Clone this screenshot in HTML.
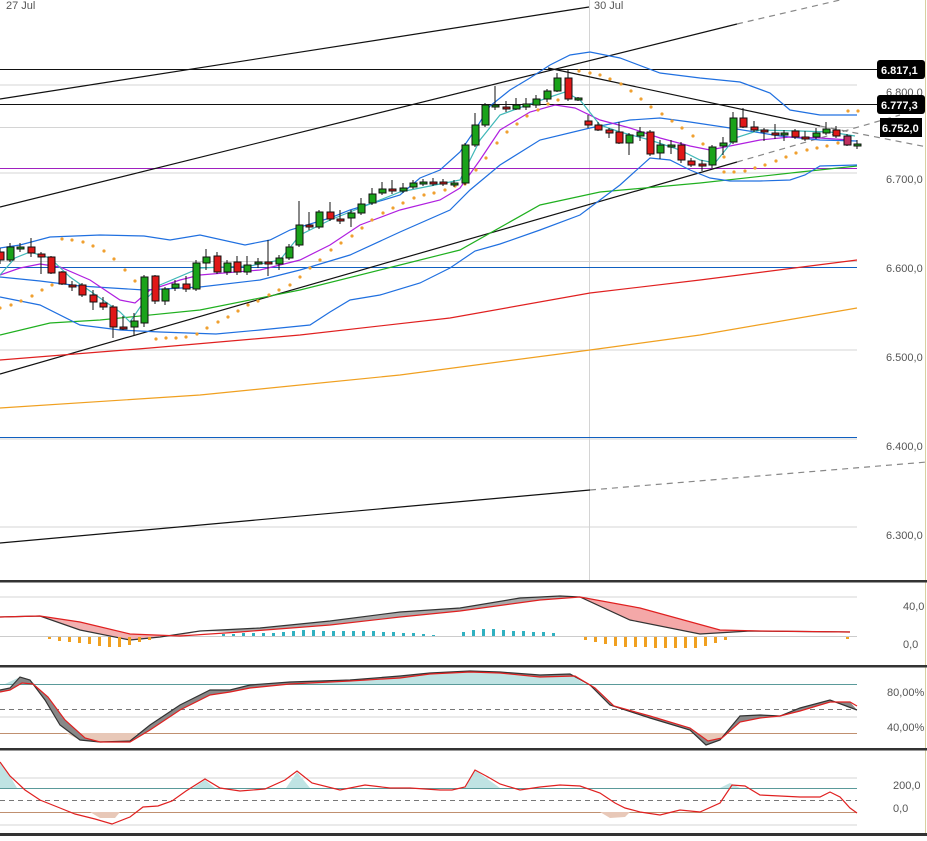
<!DOCTYPE html>
<html><head><meta charset="utf-8"><style>
html,body{margin:0;padding:0;background:#fff;}
body{width:927px;height:836px;overflow:hidden;font-family:"Liberation Sans",sans-serif;}
svg text{font-family:"Liberation Sans",sans-serif;font-size:11px;fill:#555;}
.g{fill:#1aa31a;stroke:#111;stroke-width:1}
.r{fill:#e01818;stroke:#111;stroke-width:1}
.w{stroke:#111;stroke-width:1}
</style></head><body>
<svg width="927" height="836" viewBox="0 0 927 836" xmlns="http://www.w3.org/2000/svg">
<rect width="927" height="836" fill="#fff"/>
<!-- grid -->
<g stroke="#d4d4d4" stroke-width="1">
<line x1="0" y1="85" x2="857" y2="85"/><line x1="0" y1="127.5" x2="857" y2="127.5"/><line x1="0" y1="173" x2="857" y2="173"/>
<line x1="0" y1="261.5" x2="857" y2="261.5"/><line x1="0" y1="350" x2="857" y2="350"/><line x1="0" y1="439" x2="857" y2="439"/><line x1="0" y1="527" x2="857" y2="527"/>
<line x1="589.5" y1="0" x2="589.5" y2="580"/>
<line x1="0" y1="597" x2="857" y2="597"/>
<line x1="0" y1="717" x2="857" y2="717"/>
<line x1="0" y1="778" x2="857" y2="778"/><line x1="0" y1="825" x2="857" y2="825"/>
</g>
<line x1="925.5" y1="0" x2="925.5" y2="836" stroke="#d8d0a0"/>
<text x="6" y="9">27 Jul</text><text x="594" y="9">30 Jul</text>
<!-- horizontals -->
<line x1="0" y1="69.5" x2="877" y2="69.5" stroke="#111"/>
<line x1="0" y1="104.5" x2="877" y2="104.5" stroke="#111"/>
<line x1="0" y1="168.5" x2="857" y2="168.5" stroke="#a020c0"/>
<line x1="0" y1="267.5" x2="857" y2="267.5" stroke="#1060c0"/>
<line x1="0" y1="437.5" x2="857" y2="437.5" stroke="#1060c0"/>
<!-- trend lines -->
<g stroke="#111" stroke-width="1.2" fill="none">
<line x1="0" y1="99" x2="589" y2="7"/>
<line x1="0" y1="207" x2="737" y2="24"/>
<line x1="0" y1="374" x2="737" y2="162"/>
<line x1="0" y1="543" x2="590" y2="490"/>
<line x1="548" y1="68" x2="820" y2="126"/>
</g>
<g stroke="#888" stroke-width="1.2" stroke-dasharray="6,5" fill="none">
<line x1="737" y1="24" x2="840" y2="0"/>
<line x1="737" y1="162" x2="900" y2="115"/>
<line x1="590" y1="490" x2="927" y2="462"/>
<line x1="820" y1="126" x2="927" y2="147"/>
</g>
<!-- MAs -->
<polyline fill="none" stroke="#e02020" stroke-width="1.2" points="0,360 150,348 300,335 450,318 590,293 700,280 857,260"/>
<polyline fill="none" stroke="#f0a020" stroke-width="1.2" points="0,408 200,395 400,375 590,350 700,335 857,308"/>
<polyline fill="none" stroke="#20b020" stroke-width="1.2" points="0,335 50,323 100,320 200,310 300,290 400,265 460,250 540,205 600,192 700,183 800,172 857,166"/>
<!-- bollinger -->
<g fill="none" stroke="#2070e0" stroke-width="1.2">
<polyline points="0,248 20,245 50,237 100,235 144,236 170,240 200,235 245,245 270,240 290,230 330,218 350,210 400,195 420,178 440,170 460,152 475,130 490,106 510,90 530,78 550,65 570,55 590,52 620,58 660,73 700,78 740,82 770,93 790,110 820,115 857,115"/>
<polyline points="0,277 40,281 80,286 144,290 200,287 260,280 300,270 350,255 400,232 450,210 470,190 500,165 540,140 590,128 630,120 660,118 690,122 730,128 780,136 820,140 857,141"/>
<polyline points="0,297 40,305 80,325 120,330 160,332 216,334 260,330 310,325 330,312 350,300 380,295 420,283 450,268 475,251 500,244 540,230 580,215 620,185 650,158 670,160 690,170 710,178 730,181 760,181 790,180 805,175 820,166 857,165"/>
</g>
<polyline fill="none" stroke="#b020e0" stroke-width="1.2" points="0,275 20,268 40,264 60,267 90,280 120,300 135,303 150,290 180,280 200,275 260,270 300,260 330,245 360,225 400,210 440,200 460,188 480,160 500,130 530,112 555,105 575,108 600,120 630,128 660,138 690,146 710,150 730,146 760,140 790,137 820,138 850,140"/>
<polyline fill="none" stroke="#40b8b8" stroke-width="1.2" points="0,275 15,258 30,252 50,258 70,277 100,298 120,312 130,322 145,300 160,285 200,268 250,266 280,260 300,235 330,220 360,208 400,192 440,184 460,180 480,140 500,115 530,104 550,97 565,92 580,100 600,125 620,132 650,140 680,150 700,160 715,163 735,138 760,130 800,131 830,132 855,136"/>
<!-- SAR -->
<g fill="#f0a030">
<circle cx="62" cy="239" r="1.6"/><circle cx="72" cy="240" r="1.6"/><circle cx="83" cy="242" r="1.6"/><circle cx="93" cy="246" r="1.6"/><circle cx="104" cy="251" r="1.6"/><circle cx="114" cy="259" r="1.6"/><circle cx="125" cy="270" r="1.6"/><circle cx="135" cy="281" r="1.6"/>
<circle cx="0" cy="308" r="1.6"/><circle cx="11" cy="305" r="1.6"/><circle cx="21" cy="301" r="1.6"/><circle cx="32" cy="296" r="1.6"/><circle cx="42" cy="290" r="1.6"/><circle cx="52" cy="285" r="1.6"/>
<circle cx="156" cy="339" r="1.6"/><circle cx="166" cy="338" r="1.6"/><circle cx="176" cy="338" r="1.6"/><circle cx="186" cy="337" r="1.6"/><circle cx="197" cy="334" r="1.6"/><circle cx="207" cy="328" r="1.6"/><circle cx="218" cy="322" r="1.6"/><circle cx="228" cy="317" r="1.6"/><circle cx="238" cy="311" r="1.6"/><circle cx="248" cy="305" r="1.6"/><circle cx="258" cy="301" r="1.6"/><circle cx="269" cy="295" r="1.6"/><circle cx="279" cy="290" r="1.6"/><circle cx="290" cy="285" r="1.6"/><circle cx="300" cy="277" r="1.6"/><circle cx="310" cy="268" r="1.6"/><circle cx="320" cy="260" r="1.6"/><circle cx="331" cy="250" r="1.6"/><circle cx="341" cy="243" r="1.6"/><circle cx="352" cy="236" r="1.6"/><circle cx="362" cy="228" r="1.6"/><circle cx="372" cy="220" r="1.6"/><circle cx="383" cy="213" r="1.6"/><circle cx="393" cy="208" r="1.6"/><circle cx="403" cy="203" r="1.6"/><circle cx="414" cy="198" r="1.6"/><circle cx="424" cy="195" r="1.6"/><circle cx="434" cy="193" r="1.6"/><circle cx="445" cy="190" r="1.6"/><circle cx="455" cy="186" r="1.6"/>
<circle cx="465" cy="184" r="1.6"/><circle cx="476" cy="170" r="1.6"/><circle cx="486" cy="158" r="1.6"/><circle cx="497" cy="143" r="1.6"/><circle cx="507" cy="132" r="1.6"/><circle cx="517" cy="124" r="1.6"/><circle cx="527" cy="116" r="1.6"/><circle cx="538" cy="110" r="1.6"/><circle cx="548" cy="104" r="1.6"/><circle cx="558" cy="100" r="1.6"/>
<circle cx="579" cy="71" r="1.6"/><circle cx="590" cy="73" r="1.6"/><circle cx="600" cy="75" r="1.6"/><circle cx="610" cy="79" r="1.6"/><circle cx="621" cy="84" r="1.6"/><circle cx="631" cy="91" r="1.6"/><circle cx="641" cy="99" r="1.6"/><circle cx="651" cy="107" r="1.6"/><circle cx="662" cy="114" r="1.6"/><circle cx="672" cy="121" r="1.6"/><circle cx="682" cy="128" r="1.6"/><circle cx="693" cy="136" r="1.6"/><circle cx="703" cy="144" r="1.6"/><circle cx="713" cy="151" r="1.6"/><circle cx="724" cy="157" r="1.6"/>
<circle cx="724" cy="172" r="1.6"/><circle cx="734" cy="172" r="1.6"/><circle cx="745" cy="171" r="1.6"/><circle cx="755" cy="168" r="1.6"/><circle cx="765" cy="165" r="1.6"/><circle cx="776" cy="161" r="1.6"/><circle cx="786" cy="157" r="1.6"/><circle cx="796" cy="153" r="1.6"/><circle cx="807" cy="150" r="1.6"/><circle cx="817" cy="148" r="1.6"/><circle cx="827" cy="146" r="1.6"/><circle cx="838" cy="143" r="1.6"/><circle cx="848" cy="111" r="1.6"/><circle cx="858" cy="111" r="1.6"/>
</g>
<!-- candles -->
<g>
<line class="w" x1="0" y1="248" x2="0" y2="264"/><rect class="r" x="-3" y="252" width="7" height="8"/>
<line class="w" x1="10" y1="243" x2="10" y2="262"/><rect class="g" x="7" y="247" width="7" height="13"/>
<line class="w" x1="20" y1="243" x2="20" y2="252"/><rect class="g" x="17" y="247" width="7" height="2"/>
<line class="w" x1="31" y1="238" x2="31" y2="257"/><rect class="r" x="28" y="247" width="7" height="6"/>
<line class="w" x1="41" y1="252" x2="41" y2="274"/><rect class="r" x="38" y="254" width="7" height="3"/>
<line class="w" x1="51" y1="256" x2="51" y2="274"/><rect class="r" x="48" y="257" width="7" height="16"/>
<line class="w" x1="62" y1="271" x2="62" y2="285"/><rect class="r" x="59" y="272" width="7" height="12"/>
<line class="w" x1="72" y1="281" x2="72" y2="291"/><rect class="r" x="69" y="285" width="7" height="2"/>
<line class="w" x1="82" y1="283" x2="82" y2="297"/><rect class="r" x="79" y="285" width="7" height="10"/>
<line class="w" x1="93" y1="290" x2="93" y2="310"/><rect class="r" x="90" y="295" width="7" height="7"/>
<line class="w" x1="103" y1="297" x2="103" y2="310"/><rect class="r" x="100" y="303" width="7" height="4"/>
<line class="w" x1="113" y1="305" x2="113" y2="338"/><rect class="r" x="110" y="307" width="7" height="20"/>
<line class="w" x1="123" y1="316" x2="123" y2="330"/><rect class="r" x="120" y="327" width="7" height="2"/>
<line class="w" x1="134" y1="313" x2="134" y2="336"/><rect class="g" x="131" y="321" width="7" height="6"/>
<line class="w" x1="144" y1="275" x2="144" y2="327"/><rect class="g" x="141" y="277" width="7" height="46"/>
<line class="w" x1="155" y1="275" x2="155" y2="304"/><rect class="r" x="152" y="276" width="7" height="25"/>
<line class="w" x1="165" y1="287" x2="165" y2="305"/><rect class="g" x="162" y="289" width="7" height="12"/>
<line class="w" x1="175" y1="280" x2="175" y2="291"/><rect class="g" x="172" y="284" width="7" height="4"/>
<line class="w" x1="186" y1="276" x2="186" y2="292"/><rect class="r" x="183" y="284" width="7" height="5"/>
<line class="w" x1="196" y1="260" x2="196" y2="291"/><rect class="g" x="193" y="263" width="7" height="26"/>
<line class="w" x1="206" y1="249" x2="206" y2="270"/><rect class="g" x="203" y="257" width="7" height="6"/>
<line class="w" x1="217" y1="252" x2="217" y2="274"/><rect class="r" x="214" y="256" width="7" height="16"/>
<line class="w" x1="227" y1="260" x2="227" y2="275"/><rect class="g" x="224" y="263" width="7" height="9"/>
<line class="w" x1="237" y1="256" x2="237" y2="275"/><rect class="r" x="234" y="262" width="7" height="10"/>
<line class="w" x1="247" y1="256" x2="247" y2="275"/><rect class="g" x="244" y="265" width="7" height="7"/>
<line class="w" x1="258" y1="258" x2="258" y2="268"/><rect class="g" x="255" y="262" width="7" height="2"/>
<line class="w" x1="268" y1="240" x2="268" y2="276"/><rect class="r" x="265" y="262" width="7" height="2"/>
<line class="w" x1="279" y1="255" x2="279" y2="270"/><rect class="g" x="276" y="258" width="7" height="6"/>
<line class="w" x1="289" y1="244" x2="289" y2="260"/><rect class="g" x="286" y="247" width="7" height="11"/>
<line class="w" x1="299" y1="201" x2="299" y2="247"/><rect class="g" x="296" y="225" width="7" height="20"/>
<line class="w" x1="309" y1="212" x2="309" y2="230"/><rect class="r" x="306" y="225" width="7" height="2"/>
<line class="w" x1="319" y1="210" x2="319" y2="229"/><rect class="g" x="316" y="212" width="7" height="15"/>
<line class="w" x1="330" y1="202" x2="330" y2="221"/><rect class="r" x="327" y="212" width="7" height="7"/>
<line class="w" x1="340" y1="210" x2="340" y2="224"/><rect class="r" x="337" y="219" width="7" height="2"/>
<line class="w" x1="351" y1="210" x2="351" y2="227"/><rect class="g" x="348" y="213" width="7" height="5"/>
<line class="w" x1="361" y1="198" x2="361" y2="215"/><rect class="g" x="358" y="204" width="7" height="9"/>
<line class="w" x1="372" y1="188" x2="372" y2="205"/><rect class="g" x="369" y="194" width="7" height="9"/>
<line class="w" x1="382" y1="182" x2="382" y2="195"/><rect class="g" x="379" y="189" width="7" height="4"/>
<line class="w" x1="392" y1="180" x2="392" y2="194"/><rect class="r" x="389" y="189" width="7" height="2"/>
<line class="w" x1="403" y1="183" x2="403" y2="193"/><rect class="g" x="400" y="188" width="7" height="3"/>
<line class="w" x1="413" y1="180" x2="413" y2="189"/><rect class="g" x="410" y="183" width="7" height="4"/>
<line class="w" x1="423" y1="179" x2="423" y2="186"/><rect class="g" x="420" y="182" width="7" height="2"/>
<line class="w" x1="433" y1="178" x2="433" y2="186"/><rect class="r" x="430" y="182" width="7" height="2"/>
<line class="w" x1="443" y1="179" x2="443" y2="186"/><rect class="r" x="440" y="182" width="7" height="2"/>
<line class="w" x1="454" y1="180" x2="454" y2="187"/><rect class="g" x="451" y="183" width="7" height="2"/>
<line class="w" x1="465" y1="143" x2="465" y2="185"/><rect class="g" x="462" y="145" width="7" height="38"/>
<line class="w" x1="475" y1="113" x2="475" y2="147"/><rect class="g" x="472" y="125" width="7" height="20"/>
<line class="w" x1="485" y1="103" x2="485" y2="127"/><rect class="g" x="482" y="105" width="7" height="20"/>
<line class="w" x1="495" y1="86" x2="495" y2="110"/><rect class="g" x="492" y="105" width="7" height="2"/>
<line class="w" x1="506" y1="101" x2="506" y2="112"/><rect class="r" x="503" y="107" width="7" height="2"/>
<line class="w" x1="516" y1="98" x2="516" y2="110"/><rect class="g" x="513" y="105" width="7" height="4"/>
<line class="w" x1="526" y1="98" x2="526" y2="110"/><rect class="g" x="523" y="104" width="7" height="3"/>
<line class="w" x1="536" y1="95" x2="536" y2="108"/><rect class="g" x="533" y="99" width="7" height="6"/>
<line class="w" x1="547" y1="89" x2="547" y2="102"/><rect class="g" x="544" y="91" width="7" height="8"/>
<line class="w" x1="557" y1="73" x2="557" y2="92"/><rect class="g" x="554" y="78" width="7" height="13"/>
<line class="w" x1="568" y1="70" x2="568" y2="101"/><rect class="r" x="565" y="78" width="7" height="21"/>
<line class="w" x1="578" y1="97" x2="578" y2="101"/><rect class="g" x="575" y="98" width="7" height="2"/>
<line class="w" x1="588" y1="115" x2="588" y2="128"/><rect class="r" x="585" y="121" width="7" height="4"/>
<line class="w" x1="598" y1="122" x2="598" y2="131"/><rect class="r" x="595" y="125" width="7" height="5"/>
<line class="w" x1="609" y1="128" x2="609" y2="138"/><rect class="r" x="606" y="130" width="7" height="3"/>
<line class="w" x1="619" y1="122" x2="619" y2="144"/><rect class="r" x="616" y="132" width="7" height="11"/>
<line class="w" x1="629" y1="133" x2="629" y2="155"/><rect class="g" x="626" y="135" width="7" height="8"/>
<line class="w" x1="640" y1="127" x2="640" y2="141"/><rect class="g" x="637" y="132" width="7" height="4"/>
<line class="w" x1="650" y1="130" x2="650" y2="156"/><rect class="r" x="647" y="132" width="7" height="22"/>
<line class="w" x1="660" y1="140" x2="660" y2="159"/><rect class="g" x="657" y="145" width="7" height="8"/>
<line class="w" x1="671" y1="140" x2="671" y2="154"/><rect class="g" x="668" y="145" width="7" height="2"/>
<line class="w" x1="681" y1="142" x2="681" y2="163"/><rect class="r" x="678" y="145" width="7" height="15"/>
<line class="w" x1="691" y1="158" x2="691" y2="167"/><rect class="r" x="688" y="161" width="7" height="4"/>
<line class="w" x1="702" y1="160" x2="702" y2="171"/><rect class="r" x="699" y="164" width="7" height="2"/>
<line class="w" x1="712" y1="145" x2="712" y2="168"/><rect class="g" x="709" y="147" width="7" height="18"/>
<line class="w" x1="723" y1="137" x2="723" y2="155"/><rect class="g" x="720" y="143" width="7" height="3"/>
<line class="w" x1="733" y1="112" x2="733" y2="144"/><rect class="g" x="730" y="118" width="7" height="24"/>
<line class="w" x1="743" y1="108" x2="743" y2="128"/><rect class="r" x="740" y="118" width="7" height="9"/>
<line class="w" x1="754" y1="121" x2="754" y2="132"/><rect class="r" x="751" y="127" width="7" height="3"/>
<line class="w" x1="764" y1="128" x2="764" y2="141"/><rect class="r" x="761" y="130" width="7" height="2"/>
<line class="w" x1="775" y1="124" x2="775" y2="139"/><rect class="r" x="772" y="133" width="7" height="2"/>
<line class="w" x1="784" y1="130" x2="784" y2="141"/><rect class="g" x="781" y="133" width="7" height="2"/>
<line class="w" x1="795" y1="129" x2="795" y2="139"/><rect class="r" x="792" y="131" width="7" height="6"/>
<line class="w" x1="805" y1="131" x2="805" y2="141"/><rect class="r" x="802" y="137" width="7" height="2"/>
<line class="w" x1="816" y1="128" x2="816" y2="139"/><rect class="g" x="813" y="133" width="7" height="4"/>
<line class="w" x1="826" y1="122" x2="826" y2="135"/><rect class="g" x="823" y="129" width="7" height="4"/>
<line class="w" x1="836" y1="126" x2="836" y2="138"/><rect class="r" x="833" y="130" width="7" height="6"/>
<line class="w" x1="847" y1="134" x2="847" y2="146"/><rect class="r" x="844" y="136" width="7" height="9" style="fill:#c03060"/>
<line class="w" x1="857" y1="140" x2="857" y2="149"/><rect class="g" x="854" y="144" width="7" height="2"/>
</g>
<!-- price labels -->
<rect x="877" y="60" width="48" height="19" rx="3" fill="#000"/><text x="881" y="74" style="fill:#fff;font-weight:bold">6.817,1</text>
<text x="886" y="96">6.800,0</text>
<rect x="877" y="95" width="48" height="19" rx="3" fill="#000"/><text x="881" y="109" style="fill:#fff;font-weight:bold">6.777,3</text>
<rect x="880" y="118" width="42" height="19" fill="#000"/><text x="882" y="132" style="fill:#fff;font-weight:bold">6.752,0</text>
<text x="886" y="183">6.700,0</text><text x="886" y="272">6.600,0</text><text x="886" y="361">6.500,0</text><text x="886" y="450">6.400,0</text><text x="886" y="539">6.300,0</text>
<!-- separators -->
<rect x="0" y="580" width="927" height="2.5" fill="#333"/>
<rect x="0" y="665" width="927" height="2.5" fill="#333"/>
<rect x="0" y="748" width="927" height="2.5" fill="#333"/>
<rect x="0" y="833" width="927" height="3" fill="#333"/>
<!-- MACD -->
<line x1="0" y1="636.5" x2="857" y2="636.5" stroke="#ccc"/>
<polygon fill="#f2b0b0" points="0,617 40,616 80,630 130,640 160,637 200,631 180,636 130,634 80,622 40,616"/>
<polygon fill="#f4a8a8" points="580,597 630,620 700,634 750,631 850,632 760,631 720,630 640,608"/>
<polygon fill="#aaa" points="200,631 260,628 330,621 400,612 460,608 520,598 560,596 580,597 540,600 460,611 400,617 330,625 240,632"/>
<polyline fill="none" stroke="#333" stroke-width="1.2" points="0,617 40,616 80,630 130,640 160,637 200,631 260,628 330,621 400,612 460,608 520,598 560,596 580,597 630,620 700,634 750,631 850,632"/>
<polyline fill="none" stroke="#e02020" stroke-width="1.2" points="0,617 40,616 80,622 130,634 180,636 240,632 330,625 400,617 460,611 540,600 580,597 640,608 720,630 760,631 850,632"/>
<g fill="#f0a020">
<rect x="48" y="637" width="3" height="2"/><rect x="58" y="637" width="3" height="4"/><rect x="68" y="637" width="3" height="5"/><rect x="78" y="637" width="3" height="6"/><rect x="88" y="637" width="3" height="7"/><rect x="98" y="637" width="3" height="9"/><rect x="108" y="637" width="3" height="10"/><rect x="118" y="637" width="3" height="10"/><rect x="128" y="637" width="3" height="8"/><rect x="138" y="637" width="3" height="5"/><rect x="148" y="637" width="3" height="3"/>
<rect x="584" y="637" width="3" height="3"/><rect x="594" y="637" width="3" height="5"/><rect x="604" y="637" width="3" height="7"/><rect x="614" y="637" width="3" height="9"/><rect x="624" y="637" width="3" height="10"/><rect x="634" y="637" width="3" height="10"/><rect x="644" y="637" width="3" height="10"/><rect x="654" y="637" width="3" height="11"/><rect x="664" y="637" width="3" height="11"/><rect x="674" y="637" width="3" height="11"/><rect x="684" y="637" width="3" height="11"/><rect x="694" y="637" width="3" height="11"/><rect x="704" y="637" width="3" height="9"/><rect x="714" y="637" width="3" height="6"/><rect x="724" y="637" width="3" height="3"/><rect x="846" y="637" width="3" height="2"/>
</g>
<g fill="#30b0c0">
<rect x="222" y="634" width="3" height="2"/><rect x="232" y="634" width="3" height="2"/><rect x="242" y="633" width="3" height="3"/><rect x="252" y="633" width="3" height="3"/><rect x="262" y="633" width="3" height="3"/><rect x="272" y="633" width="3" height="3"/><rect x="282" y="632" width="3" height="4"/><rect x="292" y="631" width="3" height="5"/><rect x="302" y="630" width="3" height="6"/><rect x="312" y="630" width="3" height="6"/><rect x="322" y="631" width="3" height="5"/><rect x="332" y="631" width="3" height="5"/><rect x="342" y="631" width="3" height="5"/><rect x="352" y="631" width="3" height="5"/><rect x="362" y="631" width="3" height="5"/><rect x="372" y="631" width="3" height="5"/><rect x="382" y="632" width="3" height="4"/><rect x="392" y="632" width="3" height="4"/><rect x="402" y="633" width="3" height="3"/><rect x="412" y="633" width="3" height="3"/><rect x="422" y="634" width="3" height="2"/><rect x="432" y="635" width="3" height="1"/><rect x="462" y="632" width="3" height="4"/><rect x="472" y="630" width="3" height="6"/><rect x="482" y="629" width="3" height="7"/><rect x="492" y="629" width="3" height="7"/><rect x="502" y="630" width="3" height="6"/><rect x="512" y="631" width="3" height="5"/><rect x="522" y="631" width="3" height="5"/><rect x="532" y="632" width="3" height="4"/><rect x="542" y="632" width="3" height="4"/><rect x="552" y="633" width="3" height="3"/>
</g>
<text x="903" y="610">40,0</text><text x="903" y="648">0,0</text>
<!-- Stoch -->
<line x1="0" y1="684.5" x2="857" y2="684.5" stroke="#5a9a9a"/>
<line x1="0" y1="709.5" x2="857" y2="709.5" stroke="#777" stroke-dasharray="5,4"/>
<line x1="0" y1="733.5" x2="857" y2="733.5" stroke="#c09070"/>
<polygon fill="#bfe3e3" points="5,684 20,677 30,680 35,684"/>
<polygon fill="#bfe3e3" points="250,684 290,682 350,680 400,676 430,673 470,671 500,672 540,675 570,674 585,684"/>
<polygon fill="#e8c8b8" points="66,733 80,740 100,742 130,741 138,733"/>
<polygon fill="#e8c8b8" points="695,733 706,745 720,740 725,733"/>
<polygon fill="#888" points="0,690 10,688 20,677 30,680 45,700 60,725 80,740 100,742 130,741 150,725 180,705 210,690 230,690 250,685 290,682 350,680 400,676 430,673 470,671 500,672 540,675 570,674 590,685 610,705 650,718 690,730 706,745 720,740 740,716 760,715 780,716 800,708 830,700 857,710 850,702 830,702 800,711 780,716 760,718 740,722 722,738 708,741 690,728 650,716 614,706 595,688 575,676 540,677 500,673 470,672 430,674 400,678 350,681 290,684 250,688 230,692 210,695 180,710 150,730 130,742 100,742 85,738 65,720 48,697 33,684 22,683 10,690 0,692"/>
<polyline fill="none" stroke="#333" stroke-width="1.2" points="0,690 10,688 20,677 30,680 45,700 60,725 80,740 100,742 130,741 150,725 180,705 210,690 230,690 250,685 290,682 350,680 400,676 430,673 470,671 500,672 540,675 570,674 590,685 610,705 650,718 690,730 706,745 720,740 740,716 760,715 780,716 800,708 830,700 857,710"/>
<polyline fill="none" stroke="#e02020" stroke-width="1.2" points="0,692 10,690 22,683 33,684 48,697 65,720 85,738 100,742 130,742 150,730 180,710 210,695 230,692 250,688 290,684 350,681 400,678 430,674 470,672 500,673 540,677 575,676 595,688 614,706 650,716 690,728 708,741 722,738 740,722 760,718 780,716 800,711 830,702 850,702 857,706"/>
<text x="887" y="696">80,00%</text><text x="887" y="731">40,00%</text>
<!-- CCI -->
<line x1="0" y1="788.5" x2="857" y2="788.5" stroke="#5a9a9a"/>
<line x1="0" y1="800.5" x2="857" y2="800.5" stroke="#777" stroke-dasharray="5,4"/>
<line x1="0" y1="812.5" x2="857" y2="812.5" stroke="#c09070"/>
<polygon fill="#bfe3e3" points="0,762 10,776 17,788 0,788"/>
<polygon fill="#bfe3e3" points="193,788 205,780 215,788"/>
<polygon fill="#bfe3e3" points="286,788 297,772 310,788"/>
<polygon fill="#bfe3e3" points="465,788 475,770 500,788"/>
<polygon fill="#bfe3e3" points="720,788 730,783 740,788"/>
<polygon fill="#e8c8b8" points="90,812 100,818 115,818 120,812"/>
<polygon fill="#e8c8b8" points="600,812 610,818 625,817 630,812"/>
<polyline fill="none" stroke="#e02020" stroke-width="1.2" points="0,762 10,776 25,790 40,800 60,808 75,814 95,819 112,824 130,817 143,807 158,806 172,801 186,791 205,779 220,788 240,791 265,789 285,780 297,771 312,783 340,790 365,785 390,788 410,788 440,790 452,790 465,787 475,770 488,777 500,784 520,790 540,787 560,785 580,786 600,793 615,803 625,808 640,812 660,815 680,810 700,812 720,803 732,785 745,786 760,795 780,796 800,797 820,797 830,792 840,797 850,808 857,813"/>
<text x="893" y="789">200,0</text><text x="893" y="812">0,0</text>
</svg>
</body></html>
